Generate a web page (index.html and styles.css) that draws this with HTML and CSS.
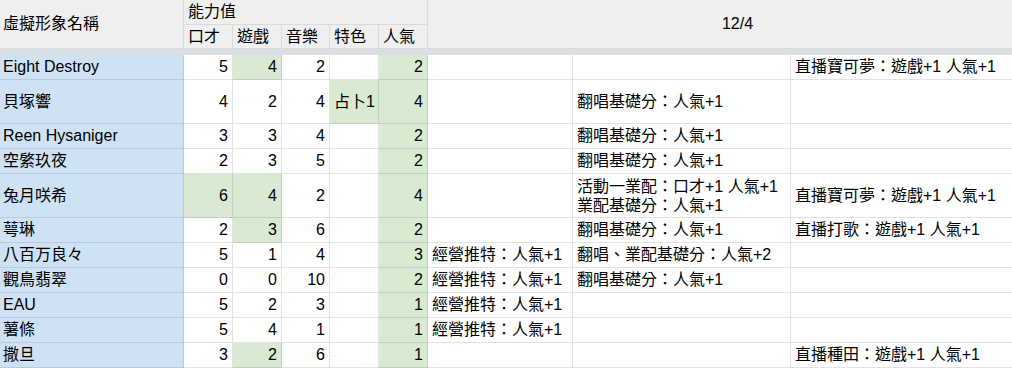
FILE: index.html
```html
<!DOCTYPE html>
<html lang="zh-Hant">
<head>
<meta charset="utf-8">
<title>虛擬形象能力值</title>
<link rel="stylesheet" href="styles.css">
</head>
<body>
<div class="sheet">
  <div class="c hd name-hd">虛擬形象名稱</div>
  <div class="c hd ability-hd">能力值</div>
  <div class="c hd date-hd">12/4</div>
  <div class="c hd">口才</div>
  <div class="c hd">遊戲</div>
  <div class="c hd">音樂</div>
  <div class="c hd">特色</div>
  <div class="c hd">人氣</div>
  <div class="sep"></div>

  <div class="c nm">Eight Destroy</div>
  <div class="c n">5</div><div class="c n g">4</div><div class="c n">2</div><div class="c"></div><div class="c n g">2</div>
  <div class="c"></div><div class="c"></div><div class="c">直播寶可夢：遊戲+1 人氣+1</div>

  <div class="c nm">貝塚響</div>
  <div class="c n">4</div><div class="c n">2</div><div class="c n">4</div><div class="c g">占卜1</div><div class="c n g">4</div>
  <div class="c"></div><div class="c">翻唱基礎分：人氣+1</div><div class="c"></div>

  <div class="c nm">Reen Hysaniger</div>
  <div class="c n">3</div><div class="c n">3</div><div class="c n">4</div><div class="c"></div><div class="c n g">2</div>
  <div class="c"></div><div class="c">翻唱基礎分：人氣+1</div><div class="c"></div>

  <div class="c nm">空綮玖夜</div>
  <div class="c n">2</div><div class="c n">3</div><div class="c n">5</div><div class="c"></div><div class="c n g">2</div>
  <div class="c"></div><div class="c">翻唱基礎分：人氣+1</div><div class="c"></div>

  <div class="c nm">兔月咲希</div>
  <div class="c n g">6</div><div class="c n g">4</div><div class="c n">2</div><div class="c"></div><div class="c n g">4</div>
  <div class="c"></div><div class="c"><div class="lines">活動一業配：口才+1 人氣+1<br>業配基礎分：人氣+1</div></div><div class="c">直播寶可夢：遊戲+1 人氣+1</div>

  <div class="c nm">萼琳</div>
  <div class="c n">2</div><div class="c n g">3</div><div class="c n">6</div><div class="c"></div><div class="c n g">2</div>
  <div class="c"></div><div class="c">翻唱基礎分：人氣+1</div><div class="c">直播打歌：遊戲+1 人氣+1</div>

  <div class="c nm">八百万良々</div>
  <div class="c n">5</div><div class="c n">1</div><div class="c n">4</div><div class="c"></div><div class="c n g">3</div>
  <div class="c">經營推特：人氣+1</div><div class="c">翻唱、業配基礎分：人氣+2</div><div class="c"></div>

  <div class="c nm">觀鳥翡翠</div>
  <div class="c n">0</div><div class="c n">0</div><div class="c n">10</div><div class="c"></div><div class="c n g">2</div>
  <div class="c">經營推特：人氣+1</div><div class="c">翻唱基礎分：人氣+1</div><div class="c"></div>

  <div class="c nm">EAU</div>
  <div class="c n">5</div><div class="c n">2</div><div class="c n">3</div><div class="c"></div><div class="c n g">1</div>
  <div class="c">經營推特：人氣+1</div><div class="c"></div><div class="c"></div>

  <div class="c nm">薯條</div>
  <div class="c n">5</div><div class="c n">4</div><div class="c n">1</div><div class="c"></div><div class="c n g">1</div>
  <div class="c">經營推特：人氣+1</div><div class="c"></div><div class="c"></div>

  <div class="c nm">撒旦</div>
  <div class="c n">3</div><div class="c n g">2</div><div class="c n">6</div><div class="c"></div><div class="c n g">1</div>
  <div class="c"></div><div class="c"></div><div class="c">直播種田：遊戲+1 人氣+1</div>
</div>
</body>
</html>
```

FILE: styles.css
```css
html, body {
  margin: 0;
  padding: 0;
  background: #ffffff;
  overflow: hidden;
}

.sheet {
  display: grid;
  grid-template-columns: 184px 49px 49px 48px 49px 49px 145px 218px 257px;
  grid-template-rows: 25px 24px 6px 25px 44px 25px 25px 44px 25px 25px 25px 25px 25px 25px;
  width: max-content;
  font-family: "Liberation Sans", Arial, "Noto Sans CJK TC", sans-serif;
  font-size: 16px;
  color: #000000;
}

.c {
  box-sizing: border-box;
  display: flex;
  align-items: center;
  padding: 0 4px 0 4px;
  border-right: 1px solid #e2e2e2;
  border-bottom: 1px solid #e2e2e2;
  white-space: nowrap;
  overflow: hidden;
  line-height: 18px;
}

.hd {
  background: #efefef;
  border-color: #dadada;
}

.name-hd {
  grid-row: span 2;
  padding-left: 3px;
}

.ability-hd {
  grid-column: span 5;
}

.date-hd {
  grid-column: span 3;
  grid-row: span 2;
  justify-content: center;
}

.sep {
  grid-column: 1 / -1;
  background: #dadfe6;
}

.nm {
  background: #cfe2f3;
  border-color: #b9cadb;
  padding-left: 3px;
}

.n {
  justify-content: flex-end;
}

.g {
  background: #d9ead3;
  border-color: #bfd2b8;
}

.lines {
  line-height: 19px;
}
```
